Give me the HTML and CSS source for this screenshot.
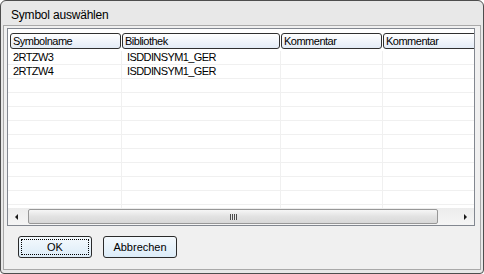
FILE: index.html
```html
<!DOCTYPE html>
<html lang="de">
<head>
  <meta charset="UTF-8" />
  <meta name="viewport" content="width=device-width, initial-scale=1.0" />
  <title>Symbol auswählen</title>

  <link rel="stylesheet" href="styles.css">
</head>

<body>
  <div class="window">
    <div class="titlebar">Symbol auswählen</div>

    <div class="client">
      <div class="list">
        <div class="header">
          <div class="col-head c1">Symbolname</div>
          <div class="col-head c2">Bibliothek</div>
          <div class="col-head c3">Kommentar</div>
          <div class="col-head c4">Kommentar</div>
        </div>

        <div class="rows">
          <div class="row"><div class="cell c1">2RTZW3</div><div class="cell c2">ISDDINSYM1_GER</div><div class="cell c3"></div><div class="cell c4"></div></div>
          <div class="row"><div class="cell c1">2RTZW4</div><div class="cell c2">ISDDINSYM1_GER</div><div class="cell c3"></div><div class="cell c4"></div></div>
          <div class="row"><div class="cell c1"></div><div class="cell c2"></div><div class="cell c3"></div><div class="cell c4"></div></div>
          <div class="row"><div class="cell c1"></div><div class="cell c2"></div><div class="cell c3"></div><div class="cell c4"></div></div>
          <div class="row"><div class="cell c1"></div><div class="cell c2"></div><div class="cell c3"></div><div class="cell c4"></div></div>
          <div class="row"><div class="cell c1"></div><div class="cell c2"></div><div class="cell c3"></div><div class="cell c4"></div></div>
          <div class="row"><div class="cell c1"></div><div class="cell c2"></div><div class="cell c3"></div><div class="cell c4"></div></div>
          <div class="row"><div class="cell c1"></div><div class="cell c2"></div><div class="cell c3"></div><div class="cell c4"></div></div>
          <div class="row"><div class="cell c1"></div><div class="cell c2"></div><div class="cell c3"></div><div class="cell c4"></div></div>
          <div class="row"><div class="cell c1"></div><div class="cell c2"></div><div class="cell c3"></div><div class="cell c4"></div></div>
          <div class="row"><div class="cell c1"></div><div class="cell c2"></div><div class="cell c3"></div><div class="cell c4"></div></div>
          <div class="row"><div class="cell c1"></div><div class="cell c2"></div><div class="cell c3"></div><div class="cell c4"></div></div>
        </div>

        <div class="hscroll">
          <div class="arrow"><span class="tri left"></span></div>
          <div class="track">
            <div class="thumb"><span class="grip"></span></div>
          </div>
          <div class="arrow"><span class="tri right"></span></div>
        </div>
      </div>

      <div class="buttons">
        <button class="btn default"><span class="focus">OK</span></button>
        <button class="btn">Abbrechen</button>
      </div>
    </div>
  </div>
</body>
</html>
```

FILE: styles.css
```css
body {
  margin: 0;
  background: #fff;
  font-family: "Liberation Sans", Arial, sans-serif;
  font-size: 12px;
  color: #000;
}

.window {
  width: 484px;
  height: 274px;
  box-sizing: border-box;
  border: 1px solid #4e4e4e;
  border-radius: 6px 6px 4px 4px;
  background: #e8e8e8;
  padding: 0 2px 3px 2px;
  display: flex;
  flex-direction: column;
}

.titlebar {
  height: 24px;
  box-sizing: border-box;
  padding: 3px 0 0 8px;
  display: flex;
  align-items: center;
  font-size: 12px;
  letter-spacing: -0.2px;
}

.client {
  flex: 1;
  border: 1px solid #a9a9a9;
  background: #f0f0f0;
  padding: 2px 5px 0 3px;
  display: flex;
  flex-direction: column;
}

/* list view */
.list {
  height: 198px;
  box-sizing: border-box;
  border: 1px solid #828790;
  background: #fff;
  display: flex;
  flex-direction: column;
  overflow: hidden;
}

.header {
  height: 22px;
  box-sizing: border-box;
  padding: 4px 0 1px 2px;
  display: flex;
  gap: 1px;
  white-space: nowrap;
}

.col-head {
  flex: none;
  box-sizing: border-box;
  height: 16px;
  border: 1px solid #2f2f2f;
  border-radius: 3px;
  background: linear-gradient(#ffffff, #e3ebf6);
  padding-left: 2px;
  line-height: 14px;
  font-size: 11px;
  letter-spacing: -0.5px;
}

.col-head.c1 { width: 111px; }
.col-head.c2 { width: 158px; }
.col-head.c3 { width: 101px; }
.col-head.c4 { width: 100px; }

.rows {
  flex: 1;
  overflow: hidden;
}

.row {
  display: flex;
  height: 14px;
  box-sizing: border-box;
  border-bottom: 1px solid #f0f0f0;
}

.cell {
  flex: none;
  box-sizing: border-box;
  border-right: 1px solid #f0f0f0;
  padding-left: 5px;
  line-height: 13px;
  font-size: 11px;
  letter-spacing: -0.6px;
  white-space: nowrap;
}

.cell.c1 { width: 114px; }
.cell.c2 { width: 159px; }
.cell.c3 { width: 102px; }
.cell.c4 { flex: 1; border-right: none; }

/* horizontal scrollbar */
.hscroll {
  height: 17px;
  display: flex;
  background: linear-gradient(#ececec, #f5f5f5);
}

.arrow {
  width: 17px;
  display: flex;
  align-items: center;
  justify-content: center;
}

.tri {
  width: 0;
  height: 0;
  border-top: 3px solid transparent;
  border-bottom: 3px solid transparent;
}

.tri.left { border-right: 3px solid #1a1a1a; }
.tri.right { border-left: 3px solid #1a1a1a; }

.track {
  flex: 1;
  padding: 1px 0 1px 3px;
  display: flex;
}

.thumb {
  width: 410px;
  box-sizing: border-box;
  border: 1px solid #979797;
  border-radius: 2px;
  background: linear-gradient(#f6f6f6, #e2e2e2 50%, #d8d8d8);
  display: flex;
  align-items: center;
  justify-content: center;
}

.grip {
  width: 7px;
  height: 6px;
  background: repeating-linear-gradient(90deg, #4a4a4a 0 1px, #e8e8e8 1px 2px);
}

/* buttons */
.buttons {
  display: flex;
  gap: 11px;
  padding: 10px 0 0 11px;
}

.btn {
  width: 74px;
  height: 22px;
  box-sizing: border-box;
  border: 1px solid #2a2a2a;
  border-radius: 3px;
  background: linear-gradient(#f4f9fd, #dcecf8);
  font-family: "Liberation Sans", Arial, sans-serif;
  font-size: 11px;
  color: #000;
  padding: 0;
  display: flex;
  align-items: center;
  justify-content: center;
}

.btn.default {
  padding: 2px;
}

.focus {
  flex: 1;
  align-self: stretch;
  border: 1px dotted #000;
  display: flex;
  align-items: center;
  justify-content: center;
}
```
